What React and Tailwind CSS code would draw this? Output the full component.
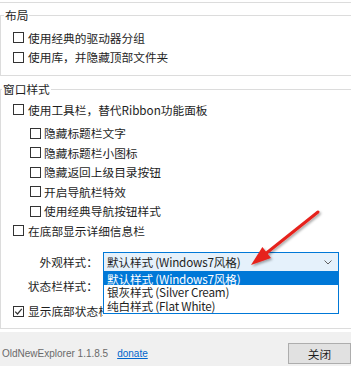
function Box({ checked }) {
  return (
    <span className="w-[11px] h-[11px] shrink-0 border border-[#333333] bg-white flex items-center justify-center">
      {checked && (
        <svg width="9" height="9" viewBox="0 0 9 9">
          <polyline points="1.2,4.6 3.5,7 7.8,1.8" fill="none" stroke="#333333" strokeWidth="1.2" />
        </svg>
      )}
    </span>
  );
}

function Row({ checked, nested, children }) {
  return (
    <div className={nested ? 'flex items-center h-[19.5px] pl-[29px]' : 'flex items-center h-[19.5px] pl-[12px]'}>
      <Box checked={checked} />
      <span className={nested ? 'ml-[3px] whitespace-nowrap' : 'ml-[4px] whitespace-nowrap'}>{children}</span>
    </div>
  );
}

function Chevron() {
  return (
    <svg width="8" height="5" viewBox="0 0 8 5" className="absolute right-[6px] top-[7px]">
      <polyline points="0.5,0.5 4,4 7.5,0.5" fill="none" stroke="#606060" strokeWidth="1" />
    </svg>
  );
}

export default function App() {
  const items = ['默认样式 (Windows7风格)', '银灰样式 (Silver Cream)', '纯白样式 (Flat White)'];

  return (
    <div className="relative w-[351px] h-[366px] overflow-hidden bg-white flex flex-col text-[11.7px] text-[#1e1e1e] font-['Noto_Sans_CJK_SC','Microsoft_YaHei',sans-serif]">
      <div className="mt-[2px] border-t border-[#dcdcdc]" />

      <fieldset className="mt-[4px] border border-r-0 border-[#dcdcdc] pb-[8px]">
        <legend className="ml-[3px] px-[1px] leading-[16px]">布局</legend>
        <div className="pt-[5px]">
          <Row>使用经典的驱动器分组</Row>
          <Row>使用库，并隐藏顶部文件夹</Row>
        </div>
      </fieldset>

      <fieldset className="mt-[5px] border border-r-0 border-[#dcdcdc] pb-[7px]">
        <legend className="ml-[1px] px-[1px] leading-[16px]">窗口样式</legend>
        <div className="pt-[3px]">
          <Row>使用工具栏，替代Ribbon功能面板</Row>
          <div className="mt-[4px]">
            <Row nested>隐藏标题栏文字</Row>
            <Row nested>隐藏标题栏小图标</Row>
            <Row nested>隐藏返回上级目录按钮</Row>
            <Row nested>开启导航栏特效</Row>
            <Row nested>使用经典导航按钮样式</Row>
          </div>
          <Row>在底部显示详细信息栏</Row>

          <div className="mt-[11px] flex items-center h-[20px]">
            <span className="w-[97px] text-right whitespace-nowrap">外观样式：</span>
            <div className="relative z-10 ml-[5px] w-[236px] h-[20px] border border-[#0078d7] bg-[#e5f1fb] flex items-center pl-[3px] whitespace-nowrap tracking-[-0.2px] leading-[16px]">
              默认样式 (Windows7风格)
              <Chevron />
              <div className="absolute left-[-1px] right-[-1px] top-full border border-[#0078d7] bg-white pb-[1px]">
                {items.map((item, i) => (
                  <div
                    key={item}
                    className={i === 0 ? 'h-[13.5px] leading-[13.5px] pl-[3px] bg-[#0078d7] text-white' : 'h-[13.5px] leading-[13.5px] pl-[3px]'}
                  >
                    {item}
                  </div>
                ))}
              </div>
            </div>
          </div>

          <div className="mt-[4px] flex items-center h-[20px]">
            <span className="w-[97px] text-right whitespace-nowrap">状态栏样式：</span>
            <div className="ml-[5px] w-[236px] h-[20px] border border-[#adadad] bg-[#e5e5e5]" />
          </div>

          <div className="mt-[6px] w-[102px] overflow-hidden">
            <Row checked>显示底部状态栏</Row>
          </div>
        </div>
      </fieldset>

      <div className="mt-[3px] flex-1 bg-[#f0f0f0] flex items-start pt-[11px] pl-[2px]">
        <div className="h-[21px] flex items-center text-[10px] font-['Liberation_Sans',Arial,sans-serif] text-[#6a6a6a] whitespace-nowrap">
          OldNewExplorer 1.1.8.5
          <a href="#" className="ml-[9px] text-[#0066cc] underline">donate</a>
        </div>
        <button className="ml-auto w-[63px] h-[21px] border border-[#adadad] bg-[#e1e1e1] flex items-center justify-center text-[11.7px] text-[#1e1e1e]">
          关闭
        </button>
      </div>

      <svg className="absolute inset-0 pointer-events-none z-20" width="351" height="366" viewBox="0 0 351 366">
        <defs>
          <filter id="arrowShadow" x="-20%" y="-20%" width="140%" height="140%">
            <feDropShadow dx="1.5" dy="1.5" stdDeviation="1.2" floodColor="#000000" floodOpacity="0.35" />
          </filter>
        </defs>
        <g filter="url(#arrowShadow)">
          <line x1="318" y1="212" x2="264" y2="255" stroke="#e6221c" strokeWidth="3" strokeLinecap="round" />
          <polygon points="251,265 271,258 262.4,247" fill="#e6221c" />
        </g>
      </svg>
    </div>
  );
}
